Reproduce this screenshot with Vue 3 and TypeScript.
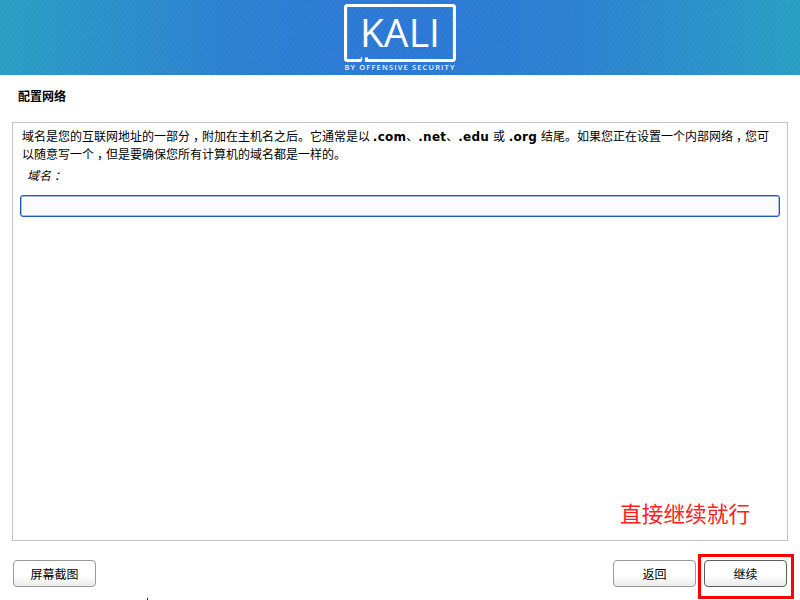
<script setup lang="ts">
const intro = '域名是您的互联网地址的一部分';
</script>

<template>
  <div class="page">
    <header class="banner">
      <div class="logo">
        <div class="frame">
          <svg class="frame-line" width="112" height="59" viewBox="0 0 112 59" aria-hidden="true">
            <path
              d="M17.5 56.5H3.5a2 2 0 0 1-2-2V3.5a2 2 0 0 1 2-2h105a2 2 0 0 1 2 2v51a2 2 0 0 1-2 2H22.5v-3"
              fill="none"
              stroke="#fff"
              stroke-width="3.2"
            />
            <path d="M17.5 56.5v-3" fill="none" stroke="#fff" stroke-width="1.6" />
          </svg>
          <span class="kali">KALI</span>
        </div>
        <div class="tagline">BY OFFENSIVE SECURITY</div>
      </div>
    </header>

    <main class="content">
      <h1 class="title">配置网络</h1>
      <section class="panel">
        <p class="desc">
          {{ intro }}<span class="punct">，</span>附加在主机名之后。它通常是以 <b class="dom">.com</b>、<b class="dom">.net</b>、<b class="dom">.edu</b>
          或 <b class="dom">.org</b> 结尾。如果您正在设置一个内部网络<span class="punct">，</span>您可以随意写一个<span class="punct">，</span>但是要确保您所有计算机的域名都是一样的。
        </p>
        <label class="field-label" for="domain">域名<span class="punct">：</span></label>
        <input id="domain" class="field" type="text" />
      </section>
      <footer class="actions">
        <button class="btn" type="button">屏幕截图</button>
        <div class="nav">
          <button class="btn" type="button">返回</button>
          <button class="btn primary" type="button">继续</button>
        </div>
      </footer>
    </main>

    <div class="note">直接继续就行</div>
    <div class="highlight"></div>
    <div class="speck"></div>
  </div>
</template>

<style>
html,
body {
  margin: 0;
  background: #fff;
}
</style>

<style scoped>
.page {
  position: relative;
  width: 800px;
  height: 600px;
  overflow: hidden;
  display: flex;
  flex-direction: column;
  background: #fff;
  font-family: "DejaVu Sans", "Noto Sans CJK SC", sans-serif;
  color: #000;
}
.banner {
  height: 75px;
  flex: none;
  display: flex;
  justify-content: center;
  background:
    repeating-linear-gradient(-55deg, rgba(255, 255, 255, 0.018) 0 2px, rgba(0, 0, 0, 0.018) 2px 4px),
    linear-gradient(90deg, #2aa0c5 0%, #2c82d2 28%, #2c78d8 50%, #2c82d2 72%, #2aa0c5 100%);
}
.logo {
  width: 112px;
  padding-top: 4px;
  display: flex;
  flex-direction: column;
  align-items: center;
}
.frame {
  position: relative;
  width: 112px;
  height: 59px;
  display: flex;
  justify-content: center;
}
.frame-line {
  position: absolute;
  inset: 0;
}
.kali {
  font-family: "Open Sans", sans-serif;
  font-size: 39px;
  font-weight: 500;
  line-height: 56px;
  color: #fff;
  letter-spacing: 0.1px;
}
.tagline {
  font-family: "Open Sans", sans-serif;
  font-size: 7.5px;
  font-weight: 600;
  line-height: 9px;
  letter-spacing: 1.15px;
  white-space: nowrap;
  color: #eef4fc;
}
.content {
  flex: 1;
  min-height: 0;
  display: flex;
  flex-direction: column;
  padding: 0 12px;
}
.title {
  margin: 0;
  padding: 15px 6px 0;
  height: 32px;
  font-size: 12px;
  line-height: 14px;
  font-weight: 700;
}
.panel {
  height: 419px;
  box-sizing: border-box;
  border: 1px solid #c4c4c4;
  padding: 5px 7px 0;
  display: flex;
  flex-direction: column;
}
.desc {
  margin: 0 0 0 2px;
  font-size: 12px;
  line-height: 18px;
  width: 750px;
}
.dom {
  font-weight: 700;
  letter-spacing: 0.25px;
}
.dom:first-of-type {
  margin-left: -1px;
}
.punct {
  font-feature-settings: "halt";
  padding: 0 3px;
}
.field-label {
  margin: 3px 0 0 7px;
  height: 28px;
  font-size: 12px;
  line-height: 18px;
  font-style: italic;
}
.field {
  width: 760px;
  height: 22px;
  box-sizing: border-box;
  border: 1px solid #1f5cb8;
  box-shadow: inset 0 0 0 0.5px #4f82cc;
  border-radius: 3px;
  background: #fdfaff;
  outline: none;
  padding: 0 4px;
}
.actions {
  display: flex;
  justify-content: space-between;
  padding: 19px 1px 0;
}
.nav {
  display: flex;
  gap: 8px;
}
.btn {
  width: 83px;
  height: 27px;
  box-sizing: border-box;
  border: 1px solid #9a9a9a;
  border-radius: 4px;
  background: linear-gradient(#fff 0%, #fff 55%, #ececec 100%);
  font-family: inherit;
  font-size: 12px;
  color: #000;
  padding: 0;
}
.primary {
  border-color: #5e5e5e;
}
.note {
  position: absolute;
  left: 620px;
  top: 499px;
  font-family: "Noto Sans CJK SC", sans-serif;
  font-size: 21.7px;
  line-height: 28px;
  color: #ff2020;
  white-space: nowrap;
}
.highlight {
  position: absolute;
  left: 698px;
  top: 554px;
  width: 96px;
  height: 45px;
  box-sizing: border-box;
  border: 3px solid #f00;
}
.speck {
  position: absolute;
  left: 147px;
  top: 598px;
  width: 1px;
  height: 2px;
  background: #222;
}
</style>
